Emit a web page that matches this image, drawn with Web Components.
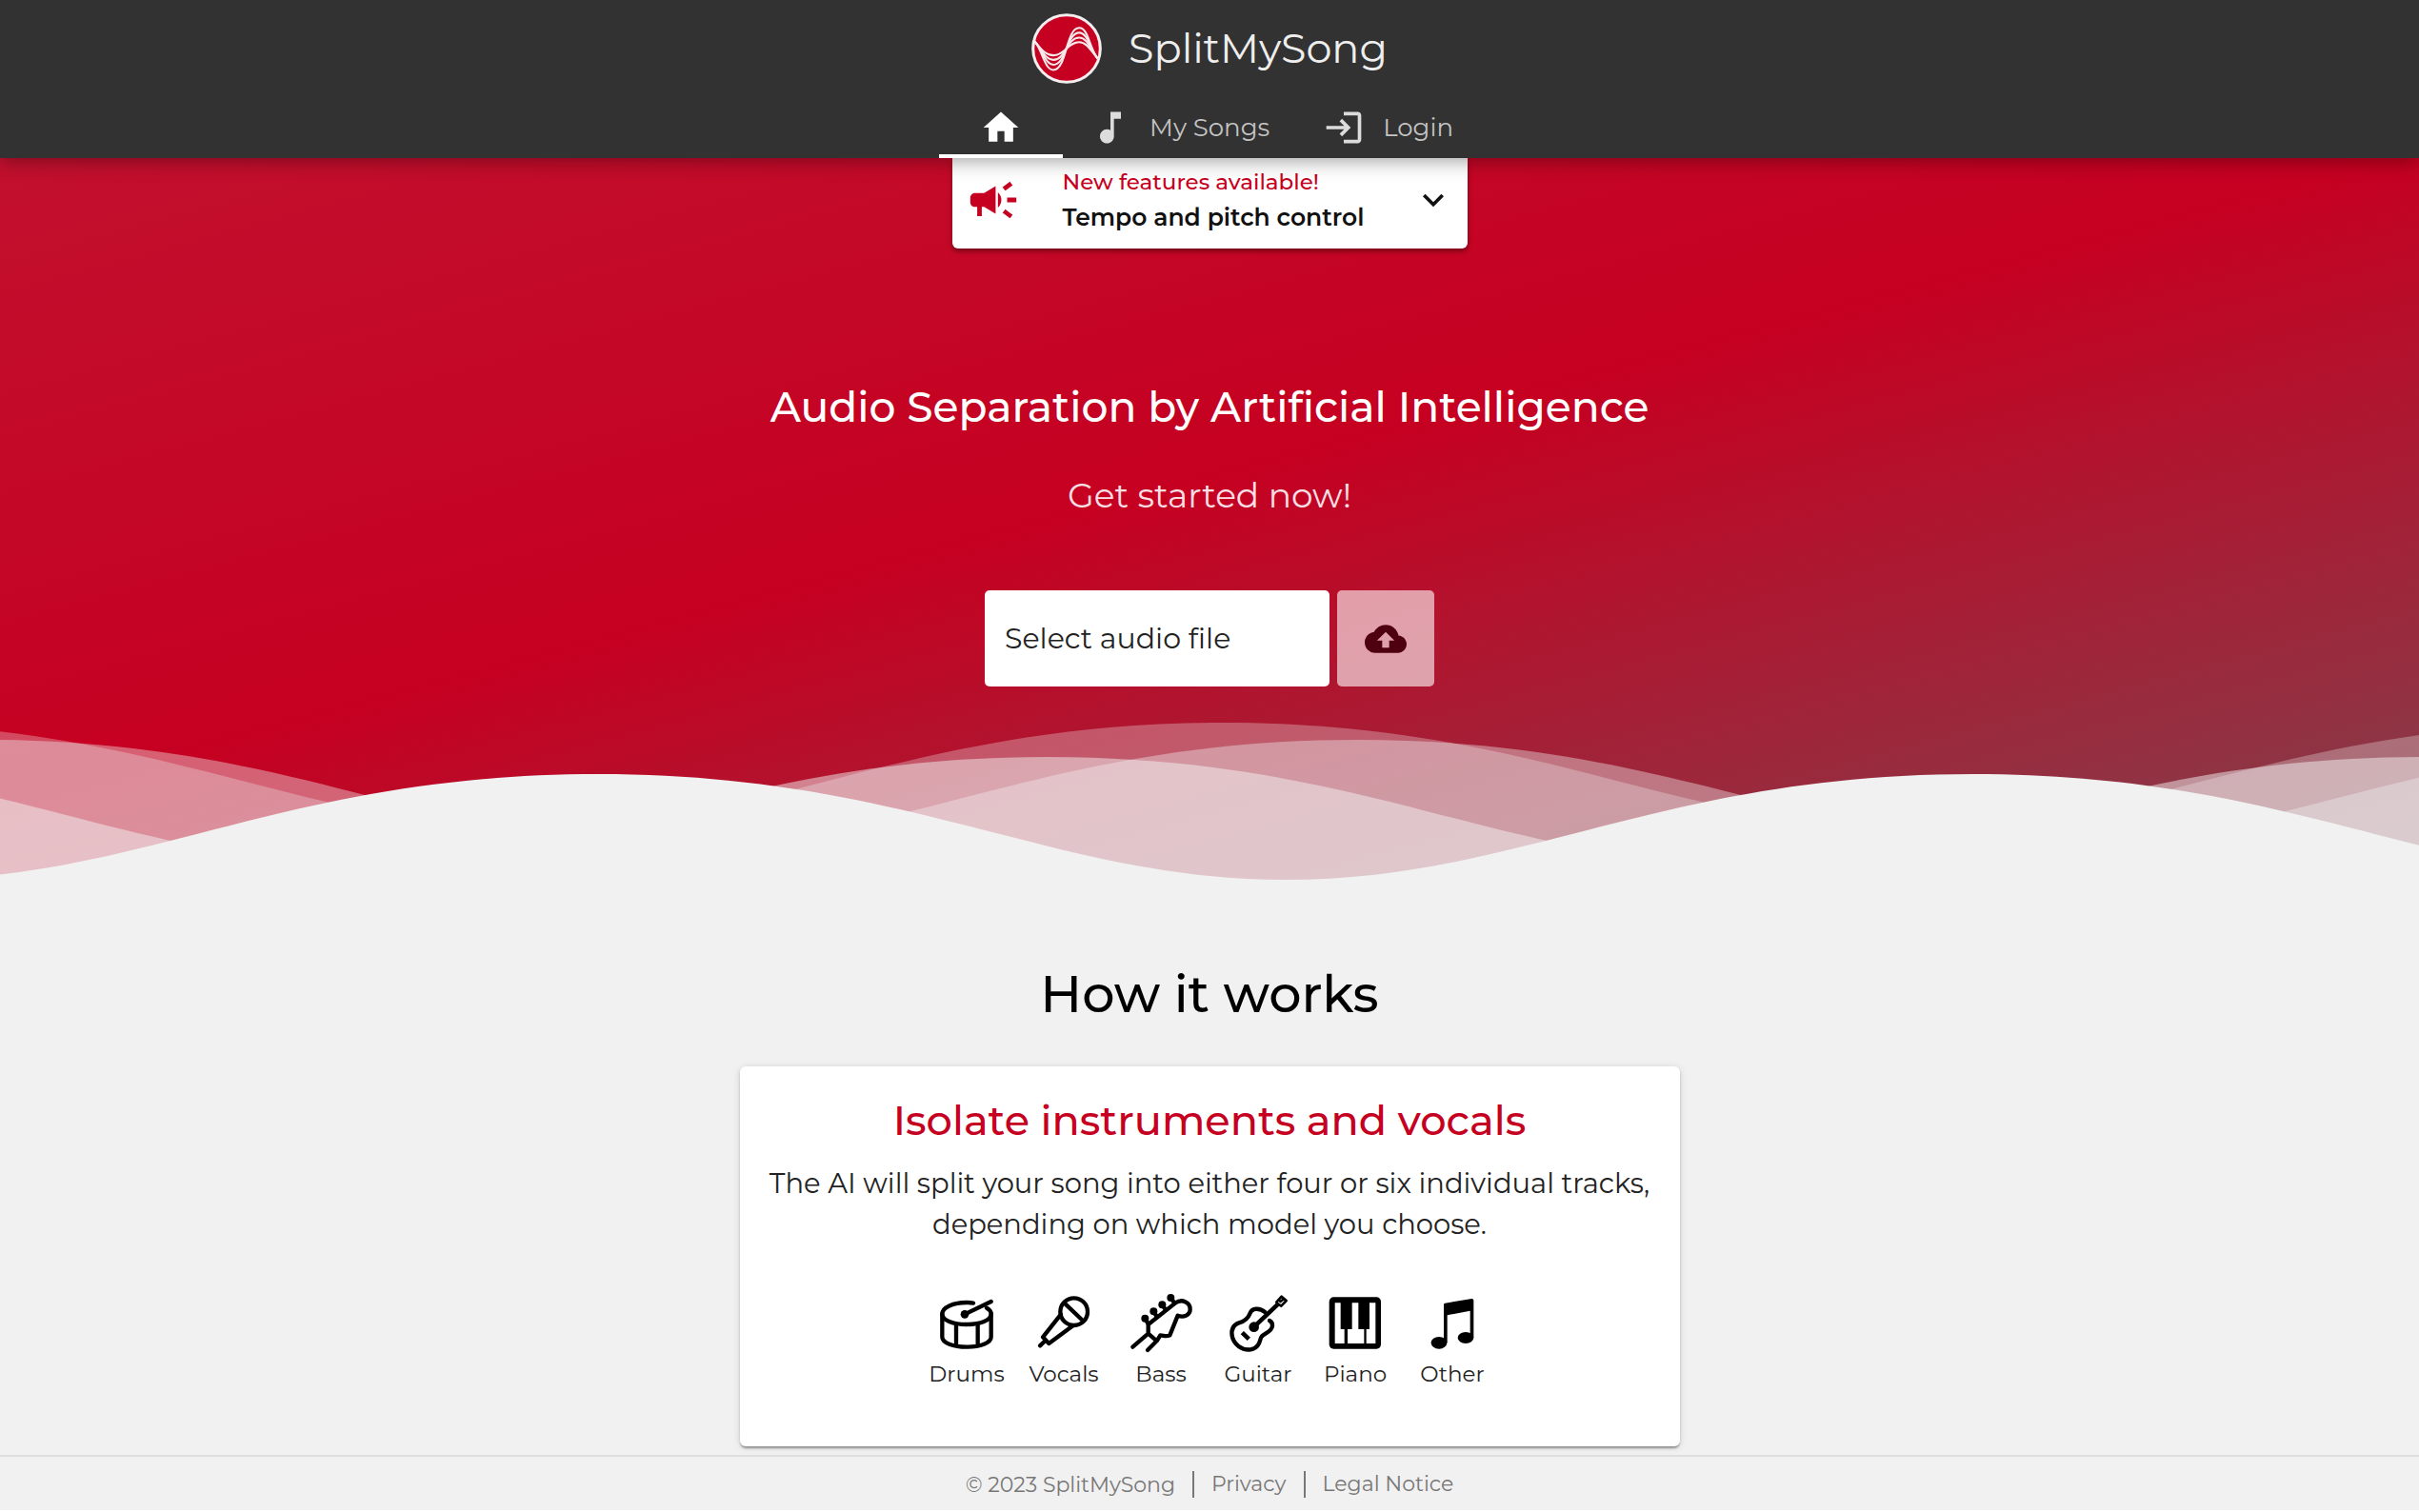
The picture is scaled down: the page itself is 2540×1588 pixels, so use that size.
<!DOCTYPE html>
<html lang="en">
<head>
<meta charset="utf-8">
<meta name="viewport" content="width=device-width, initial-scale=1">
<title>SplitMySong</title>
<style>
    :root {
        --primary: #c60021;
        --dark: #323232;
        --page: #f1f1f1;
    }

    body {
        margin: 0;
        min-height: 100vh;
        display: flex;
        flex-direction: column;
        background: var(--page);
        color: #000;
        font-family: Montserrat, Inter, "Open Sans", sans-serif;
    }

    main {
        flex: 1;
    }
</style>
</head>
<body>
<app-header></app-header>
<main>
    <hero-section>
        <news-banner slot="banner">
            <span slot="title">New features available!</span>
            Tempo and pitch control
        </news-banner>
        <span slot="title">Audio Separation by Artificial Intelligence</span>
        <span slot="subtitle">Get started now!</span>
        <file-picker label="Select audio file"></file-picker>
    </hero-section>
    <how-it-works>
        <info-card>
            <span slot="title">Isolate instruments and vocals</span>
            The AI will split your song into either four or six individual tracks, depending on which model you choose.
            <instrument-list slot="extra"></instrument-list>
        </info-card>
    </how-it-works>
</main>
<app-footer></app-footer>

<script>
const icons = {
    home: "M10 20v-6h4v6h5v-8h3L12 3 2 12h3v8z",
    note: "M12 3l.01 10.55c-.59-.34-1.27-.55-2-.55C7.79 13 6 14.79 6 17s1.79 4 4.01 4S14 19.21 14 17V7h4V3h-6z",
    login: "M11 7L9.6 8.4l2.6 2.6H2v2h10.2l-2.6 2.6L11 17l5-5-5-5zm9 12h-8v2h8c1.1 0 2-.9 2-2V5c0-1.1-.9-2-2-2h-8v2h8v14z",
    campaign: "M18 11v2h4v-2h-4zm-2 6.61c.96.71 2.21 1.65 3.2 2.39.4-.53.8-1.07 1.2-1.6-.99-.74-2.24-1.68-3.2-2.4-.4.54-.8 1.08-1.2 1.61zM20.4 5.6c-.4-.53-.8-1.07-1.2-1.6-.99.74-2.24 1.68-3.2 2.4.4.53.8 1.07 1.2 1.6.96-.72 2.21-1.65 3.2-2.4zM4 9c-1.1 0-2 .9-2 2v2c0 1.1.9 2 2 2h1v4h2v-4h1l5 3V6L8 9H4zm11.5 3c0-1.33-.58-2.53-1.5-3.35v6.69c.92-.81 1.5-2.01 1.5-3.34z",
    expand: "M7.41 8.59L12 13.17l4.59-4.58L18 10l-6 6-6-6z",
    upload: "M19.35 10.04C18.67 6.59 15.64 4 12 4 9.11 4 6.6 5.64 5.35 8.04 2.34 8.36 0 10.91 0 14c0 3.31 2.69 6 6 6h13c2.76 0 5-2.24 5-5 0-2.64-2.05-4.78-4.65-4.96zM14 13v4h-4v-4H7l5-5 5 5h-3z"
}

class MdIcon extends HTMLElement {

    constructor () {
        super()
        this.root = this.attachShadow({mode: "open"})
    }

    connectedCallback () {
        this.root.innerHTML =
        `
        <style>
            :host {
                display: block;
                flex: none;
                width: 44px;
                height: 44px;
            }

            svg {
                display: block;
                width: 100%;
                height: 100%;
                fill: currentColor;
            }
        </style>
        <svg viewBox="0 0 24 24" aria-hidden="true"><path d="${icons[this.getAttribute("name")]}"/></svg>
        `
    }
}

customElements.define("md-icon", MdIcon)

class AppHeader extends HTMLElement {

    constructor () {
        super()
        this.root = this.attachShadow({mode: "open"})
    }

    connectedCallback () {
        this.root.innerHTML =
        `
        <style>
            :host {
                display: block;
                position: sticky;
                top: 0;
                z-index: 2;
                background: var(--dark);
                box-shadow: 0 2px 20px rgba(0, 0, 0, .4);
            }

            .brand {
                display: flex;
                justify-content: center;
                align-items: center;
                gap: 28px;
                height: 102px;
                color: #eee;
                font-size: 43px;
                font-weight: 400;
                line-height: 52px;
                text-decoration: none;
            }

            .brand svg {
                width: 74px;
                height: 74px;
            }

            nav {
                display: flex;
                justify-content: center;
            }

            nav a {
                box-sizing: border-box;
                display: flex;
                align-items: center;
                gap: 19px;
                height: 64px;
                padding: 4px 28px 0;
                border-bottom: 4px solid transparent;
                color: #c4c4c4;
                font-size: 26px;
                font-weight: 400;
                text-decoration: none;
            }

            nav a.active {
                padding: 4px 43px 0;
                border-color: #fff;
                color: #fff;
            }

            nav md-icon {
                color: #dcdcdc;
            }

            .active md-icon {
                color: #fff;
            }
        </style>
        <a class="brand" href="#">
            <svg viewBox="42 43 218 218" aria-hidden="true">
                <circle cx="151" cy="152" r="104" fill="#c60021" stroke="#f4eeee" stroke-width="9"/>
                <g fill="none" stroke="#f8e8ea" stroke-width="6">
                    <path d="M52 130C74 152 82 218 110 218C152 218 148 88 190 88C220 88 222 160 250 186"/>
                    <path d="M52 130C74 150 84 202 110 202C150 202 150 103 190 103C218 103 224 160 250 186"/>
                    <path d="M52 130C72 150 84 187 110 187C148 187 152 118 190 118C216 118 226 160 250 186"/>
                    <path d="M52 130C70 150 84 173 110 173C146 173 154 132 190 132C214 132 228 162 250 186"/>
                </g>
            </svg>
            <span>SplitMySong</span>
        </a>
        <nav>
            <a class="active" href="#" aria-label="Home"><md-icon name="home"></md-icon></a>
            <a href="#songs"><md-icon name="note"></md-icon>My Songs</a>
            <a href="#login"><md-icon name="login"></md-icon>Login</a>
        </nav>
        `
    }
}

customElements.define("app-header", AppHeader)

class NewsBanner extends HTMLElement {

    constructor () {
        super()
        this.root = this.attachShadow({mode: "open"})
    }

    connectedCallback () {
        this.root.innerHTML =
        `
        <style>
            :host {
                display: block;
                width: 541px;
                max-width: 100%;
            }

            button {
                box-sizing: border-box;
                display: flex;
                align-items: center;
                width: 100%;
                height: 95px;
                padding: 0 14px 8px;
                border: none;
                border-radius: 0 0 6px 6px;
                background: #fff;
                box-shadow: 0 3px 5px rgba(0, 0, 0, .4);
                color: #111;
                font: inherit;
                font-size: 25px;
                font-weight: 600;
                line-height: 37px;
                text-align: left;
            }

            .text {
                flex: 1;
                padding-left: 44px;
            }

            .title {
                color: var(--primary);
                font-size: 23px;
                font-weight: 500;
            }

            .icon {
                width: 58px;
                height: 58px;
                color: var(--primary);
            }
        </style>
        <button aria-expanded="false">
            <md-icon class="icon" name="campaign"></md-icon>
            <div class="text">
                <div class="title"><slot name="title"></slot></div>
                <slot></slot>
            </div>
            <md-icon name="expand"></md-icon>
        </button>
        `
    }
}

customElements.define("news-banner", NewsBanner)

class FilePicker extends HTMLElement {

    constructor () {
        super()
        this.root = this.attachShadow({mode: "open"})
    }

    connectedCallback () {
        this.root.innerHTML =
        `
        <style>
            :host {
                display: flex;
                gap: 8px;
                height: 101px;
            }

            label {
                box-sizing: border-box;
                position: relative;
                display: flex;
                align-items: center;
                width: 362px;
                padding: 0 21px;
                border-radius: 5px;
                background: #fff;
                color: #222;
                font-size: 30px;
            }

            /* the native picker lies invisibly over its label */
            input {
                position: absolute;
                inset: 0;
                width: 100%;
                opacity: 0;
            }

            button {
                display: flex;
                justify-content: center;
                align-items: center;
                width: 102px;
                padding: 0;
                border: none;
                border-radius: 5px;
                background: rgba(255, 255, 255, .6);
                color: #4f0010;
            }
        </style>
        <label for="file">${this.getAttribute("label")}<input id="file" type="file" accept="audio/*"></label>
        <button aria-label="Upload" disabled><md-icon name="upload"></md-icon></button>
        `
    }
}

customElements.define("file-picker", FilePicker)

class WaveDivider extends HTMLElement {

    constructor () {
        super()
        this.root = this.attachShadow({mode: "open"})
    }

    // x and y of one crest, the wave repeats every 1444 units
    wave (x, y, opacity) {
        return `<use href="#wave" x="${x}" y="${y}" fill-opacity="${opacity}"/>`
    }

    connectedCallback () {
        this.root.innerHTML =
        `
        <style>
            :host {
                display: block;
                height: 174px;
            }

            svg {
                display: block;
                width: 100%;
                height: 100%;
                fill: var(--page);
            }
        </style>
        <svg viewBox="0 0 2540 174" preserveAspectRatio="none" aria-hidden="true">
            <defs>
                <path id="wave" d="M-2166 111c246 0 392 -111 722 -111s476 111 722 111s392 -111 722 -111s476 111 722 111s392 -111 722 -111s476 111 722 111v174h-4332z"/>
            </defs>
            ${this.wave(1284, 9, .3)}
            ${this.wave(1425, 27, .4)}
            ${this.wave(1100, 45, .5)}
            ${this.wave(628, 63, 1)}
        </svg>
        `
    }
}

customElements.define("wave-divider", WaveDivider)

class HeroSection extends HTMLElement {

    constructor () {
        super()
        this.root = this.attachShadow({mode: "open"})
    }

    connectedCallback () {
        this.root.innerHTML =
        `
        <style>
            :host {
                display: flex;
                flex-direction: column;
                align-items: center;
                background: linear-gradient(165deg, #c2102e, #c60021 47%, #80424d);
                color: #fff;
                text-align: center;
            }

            h1 {
                margin: 136px 0 0;
                font-size: 44px;
                font-weight: 500;
                line-height: 60px;
            }

            p {
                margin: 38px 0 75px;
                color: #f9dfe3;
                font-size: 36px;
                font-weight: 400;
                line-height: 50px;
            }

            wave-divider {
                width: 100%;
                margin-top: 29px;
            }
        </style>
        <slot name="banner"></slot>
        <h1><slot name="title"></slot></h1>
        <p><slot name="subtitle"></slot></p>
        <slot></slot>
        <wave-divider></wave-divider>
        `
    }
}

customElements.define("hero-section", HeroSection)

class HowItWorks extends HTMLElement {

    constructor () {
        super()
        this.root = this.attachShadow({mode: "open"})
    }

    connectedCallback () {
        this.root.innerHTML =
        `
        <style>
            :host {
                display: flex;
                flex-direction: column;
                align-items: center;
                gap: 44px;
                padding: 88px 16px 8px;
            }

            h2 {
                margin: 0;
                font-size: 54px;
                font-weight: 500;
                line-height: 64px;
            }
        </style>
        <h2>How it works</h2>
        <slot></slot>
        `
    }
}

customElements.define("how-it-works", HowItWorks)

class InfoCard extends HTMLElement {

    constructor () {
        super()
        this.root = this.attachShadow({mode: "open"})
    }

    connectedCallback () {
        this.root.innerHTML =
        `
        <style>
            :host {
                box-sizing: border-box;
                display: block;
                width: 987px;
                max-width: 100%;
                padding: 29px 20px 62px;
                border-radius: 6px;
                background: #fff;
                box-shadow: 0 3px 2px -1px rgba(0, 0, 0, .25), 0 2px 3px rgba(0, 0, 0, .14), 0 1px 8px rgba(0, 0, 0, .12);
                text-align: center;
            }

            h3 {
                margin: 0 0 16px;
                color: var(--primary);
                font-size: 43px;
                font-weight: 500;
                line-height: 56px;
            }

            p {
                margin: 0 0 50px;
                color: #222;
                font-size: 29px;
                line-height: 43px;
            }
        </style>
        <h3><slot name="title"></slot></h3>
        <p><slot></slot></p>
        <slot name="extra"></slot>
        `
    }
}

customElements.define("info-card", InfoCard)

const instruments = [
    {
        name: "Drums",
        box: "76 48 186 186",
        art: `<path d="M190 83Q180 81 169 81C126 81 92 97 92 117S126 150 169 150S246 137 246 117C246 110 242 104 232 98"/>
            <path d="M92 117V190C92 208 126 221 169 221S246 208 246 190V117M136 148V216M204 148V216M163 118L246 78"/>
            <circle class="fill" cx="163" cy="118" r="13"/>`
    },
    {
        name: "Vocals",
        box: "395 48 186 186",
        art: `<circle cx="520" cy="110" r="43"/>
            <path d="M490 83L548 138M479 118L422 190L441 210L517 154M430 201L413 217"/>`
    },
    {
        name: "Bass",
        box: "697 48 186 186",
        art: `<path d="M701 221L750 179M748 231L777 202M750 179V150L836 82C856 68 882 80 882 102C882 120 862 130 843 122L818 184C806 190 798 184 788 184L777 202L750 179"/>
            <path d="M740 132L750 148M767 110L778 126M794 88L805 104M821 66L832 82"/>
            <g class="fill"><circle cx="740" cy="131" r="12"/><circle cx="767" cy="109" r="12"/><circle cx="794" cy="88" r="12"/><circle cx="821" cy="66" r="12"/></g>`
    },
    {
        name: "Guitar",
        box: "70 48 186 186",
        art: `<path d="M186 112C166 96 144 98 137 116C131 132 120 140 103 145C84 152 78 166 81 186C86 212 112 233 140 229C164 225 168 206 172 192C178 178 206 176 208 155C209 147 205 141 199 138"/>
            <path d="M150 158L226 86M113 176L134 196" stroke-width="13"/>
            <path d="M226 86L221 80L237 62L252 75L236 92ZM233 78L241 72" stroke-width="7"/>
            <circle class="fill" cx="150" cy="158" r="16"/>`
    },
    {
        name: "Piano",
        box: "377 48 186 186",
        art: `<rect class="fill" x="388" y="64" width="163" height="163" rx="14"/>
            <path fill="#fff" stroke="none" d="M406 82h18v83h12v45h-30zM460 82h20v83h18v45h-52v-45h14zM515 82h19v128h-29v-45h10z"/>`
    },
    {
        name: "Other",
        box: "670 48 186 186",
        art: `<path class="fill" d="M736 87Q736 84 740 83L824 69Q830 69 830 74V192H819V107L747 121V208H736Z"/>
            <g class="fill"><ellipse cx="721" cy="208" rx="25" ry="19"/><ellipse cx="805" cy="192" rx="25" ry="18"/></g>`
    }
]

class InstrumentList extends HTMLElement {

    constructor () {
        super()
        this.root = this.attachShadow({mode: "open"})
    }

    connectedCallback () {
        this.root.innerHTML =
        `
        <style>
            ul {
                display: grid;
                grid-template-columns: repeat(6, 102px);
                justify-content: center;
                margin: 0;
                padding: 0;
                list-style: none;
                color: #222;
                font-size: 23px;
                line-height: 28px;
            }

            li {
                display: flex;
                flex-direction: column;
                align-items: center;
                gap: 10px;
            }

            svg {
                width: 62px;
                height: 62px;
                overflow: visible;
                fill: none;
                stroke: #000;
                stroke-width: 13px;
                stroke-linecap: round;
                stroke-linejoin: round;
            }

            [stroke-width="13"] {
                stroke-width: 14px;
                stroke-linecap: butt;
            }

            [stroke-width="7"] {
                stroke-width: 8px;
            }

            .fill {
                fill: #000;
                stroke: none;
            }
        </style>
        <ul>
            ${instruments.map(item => `
            <li>
                <svg viewBox="${item.box}" aria-hidden="true">${item.art}</svg>
                <span>${item.name}</span>
            </li>`).join("")}
        </ul>
        `
    }
}

customElements.define("instrument-list", InstrumentList)

class AppFooter extends HTMLElement {

    constructor () {
        super()
        this.root = this.attachShadow({mode: "open"})
    }

    connectedCallback () {
        this.root.innerHTML =
        `
        <style>
            :host {
                position: sticky;
                bottom: 0;
                display: block;
                background: var(--page);
                border-top: 2px solid #dedede;
                border-bottom: 2px solid #fff;
            }

            footer {
                display: flex;
                justify-content: center;
                align-items: center;
                height: 54px;
                padding-top: 2px;
                color: #777;
                font-size: 22px;
            }

            a {
                margin-left: 18px;
                padding-left: 18px;
                border-left: 2px solid #777;
                color: inherit;
                line-height: 28px;
                text-decoration: none;
            }
        </style>
        <footer>
            <span>© 2023 SplitMySong</span>
            <a href="#privacy">Privacy</a>
            <a href="#legal">Legal Notice</a>
        </footer>
        `
    }
}

customElements.define("app-footer", AppFooter)
</script>
</body>
</html>
